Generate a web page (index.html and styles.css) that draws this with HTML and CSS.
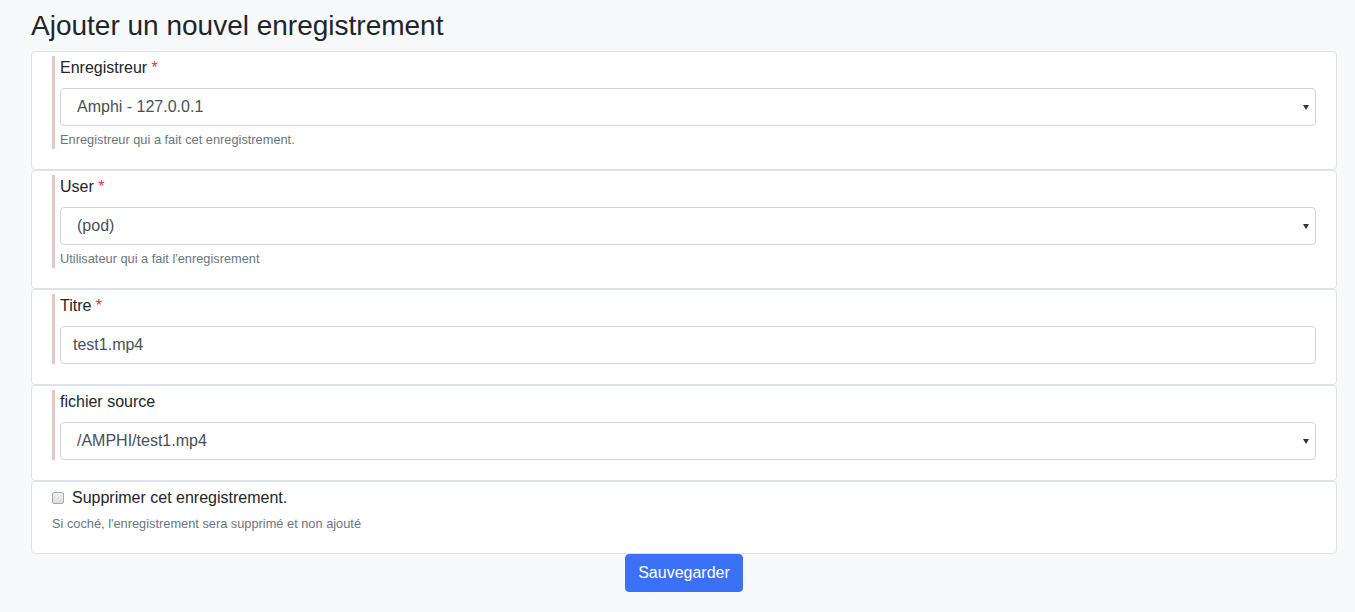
FILE: index.html
```html
<html>
  <head>
    <meta charset="utf-8">
    <link rel="stylesheet" href="styles.css">
  </head>
  <body>
    <div class="page">
      <h1 class="title">Ajouter un nouvel enregistrement</h1>
      <form class="record-form">
        <div class="card">
          <div class="field">
            <label class="field-label">Enregistreur <span class="req">*</span></label>
            <div class="select-wrap">
              <select class="control">
                <option>Amphi - 127.0.0.1</option>
              </select>
              <span class="caret"></span>
            </div>
            <small class="help">Enregistreur qui a fait cet enregistrement.</small>
          </div>
        </div>

        <div class="card">
          <div class="field">
            <label class="field-label">User <span class="req">*</span></label>
            <div class="select-wrap">
              <select class="control">
                <option>(pod)</option>
              </select>
              <span class="caret"></span>
            </div>
            <small class="help">Utilisateur qui a fait l'enregisrement</small>
          </div>
        </div>

        <div class="card">
          <div class="field">
            <label class="field-label">Titre <span class="req">*</span></label>
            <input type="text" class="control text-control" value="test1.mp4">
          </div>
        </div>

        <div class="card">
          <div class="field">
            <label class="field-label">fichier source</label>
            <div class="select-wrap">
              <select class="control">
                <option>/AMPHI/test1.mp4</option>
              </select>
              <span class="caret"></span>
            </div>
          </div>
        </div>

        <div class="card">
          <div class="check-field">
            <label class="check-label"><input type="checkbox" class="check"> Supprimer cet enregistrement.</label>
            <small class="help">Si coché, l'enregistrement sera supprimé et non ajouté</small>
          </div>
        </div>

        <div class="actions">
          <button type="button" class="btn-save">Sauvegarder</button>
        </div>
      </form>
    </div>
  </body>
</html>
```

FILE: styles.css
```css
body {
  margin: 0;
  background-color: #f8f9fa;
  font-family: "Liberation Sans", Arial, sans-serif;
  font-size: 16px;
  line-height: 1.5;
  color: #212529;
}

.page {
  padding: 0 18px 0 31px;
}

.title {
  margin: 9px 0 8px;
  font-size: 28px;
  font-weight: 400;
  line-height: 1.2;
}

/* one card per form row */
.card {
  background-color: #fff;
  border: 1px solid #dee2e6;
  border-radius: 4px;
  padding: 4px 20px 20px 20px;
}

.field {
  border-left: 3px solid #e8c6c6;
  padding-left: 5px;
}

.field-label {
  display: block;
  margin-bottom: 8px;
}

.req {
  color: #dc3545;
}

.select-wrap {
  position: relative;
}

.control {
  display: block;
  box-sizing: border-box;
  width: 100%;
  height: 38px;
  margin: 0;
  padding: 0 12px 0 16px;
  font-family: inherit;
  font-size: 16px;
  color: #495057;
  background-color: #fff;
  border: 1px solid #ced4da;
  border-radius: 4px;
  -webkit-appearance: none;
  appearance: none;
  outline: none;
}

.text-control {
  padding-left: 12px;
}

.caret {
  position: absolute;
  right: 7px;
  top: 17px;
  width: 0;
  height: 0;
  border-left: 3px solid transparent;
  border-right: 3px solid transparent;
  border-top: 5px solid #333;
}

.help {
  display: block;
  margin-top: 4px;
  font-size: 12.8px;
  line-height: 1.5;
  color: #6c757d;
}

.check-label {
  display: flex;
  align-items: center;
}

.check {
  -webkit-appearance: none;
  appearance: none;
  box-sizing: border-box;
  width: 12px;
  height: 12px;
  margin: 0 8px 0 0;
  background: linear-gradient(#f0f0f0, #dcdcdc);
  border: 1px solid #a9a9a9;
  border-radius: 2px;
}

.actions {
  display: flex;
  justify-content: center;
}

.btn-save {
  height: 38px;
  padding: 0 12px;
  font-family: inherit;
  font-size: 16px;
  color: #fff;
  background-color: #3b71f6;
  border: 1px solid #3b71f6;
  border-radius: 4px;
  cursor: pointer;
}
```
